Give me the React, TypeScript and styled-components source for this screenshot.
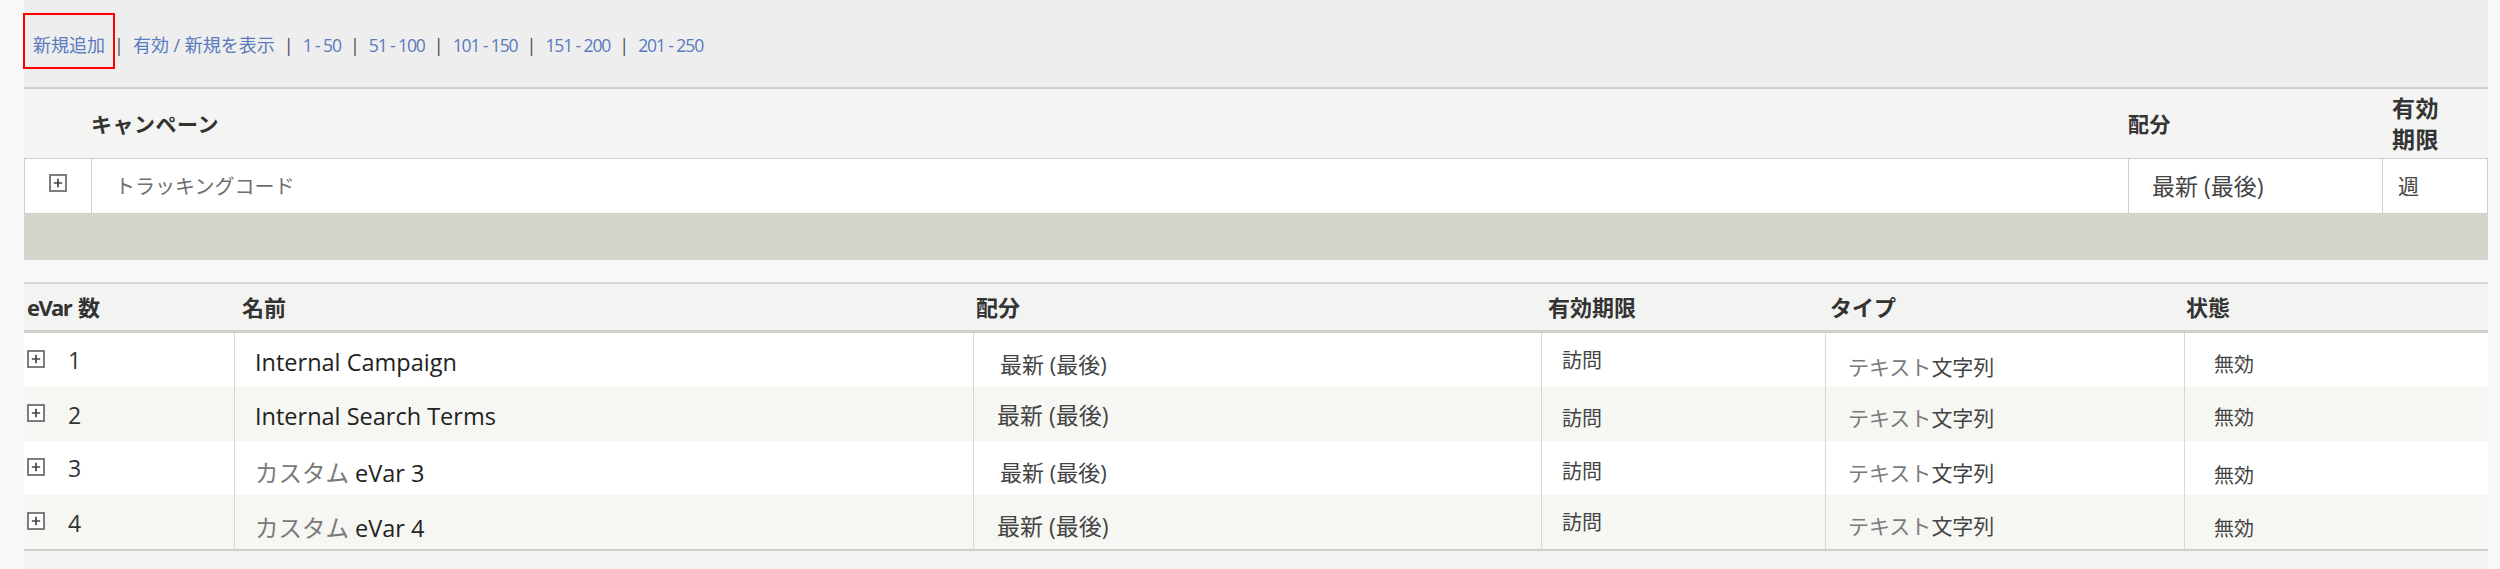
import React from "react";
import styled, { createGlobalStyle } from "styled-components";

const GlobalStyle = createGlobalStyle`
  html, body { margin: 0; padding: 0; background: #f8f8f8; }
  body {
    font-family: "Open Sans", "Noto Sans CJK JP", sans-serif;
    color: #333;
  }
  * { box-sizing: border-box; }
`;

const Page = styled.div`
  width: 2464px;
  margin-left: 24px;
  display: flex;
  flex-direction: column;
`;

/* ---------- toolbar ---------- */
const Toolbar = styled.div`
  height: 89px;
  background: #eeeeee;
  border-bottom: 2px solid #cfcfcf;
  display: flex;
  align-items: center;
  padding: 3px 0 0 9px;
  font-size: 18px;
  line-height: 24px;
`;

const LinkItem = styled.a<{ $latin: boolean }>`
  position: relative;
  color: #5a7bbd;
  text-decoration: none;
  white-space: pre;
  font-size: ${(p) => (p.$latin ? "17.5px" : "18px")};
  letter-spacing: ${(p) => (p.$latin ? "-1.1px" : "0")};
`;

const Annotation = styled.span`
  position: absolute;
  left: -10px;
  right: -10px;
  top: -20px;
  bottom: -12px;
  border: 2px solid #ff0000;
  pointer-events: none;
`;

const Sep = styled.span`
  color: #4d4d55;
  margin: 0 9px;
`;

/* ---------- campaign table ---------- */
const campCols = "67px 2037px 254px 106px";

const CampHeader = styled.div`
  height: 69px;
  background: #f4f4f2;
  display: grid;
  grid-template-columns: ${campCols};
  align-items: center;
  font-weight: 700;
  color: #333;
`;

const CampHeadCell = styled.div<{ $pl?: number; $size?: number; $lh?: number }>`
  padding-left: ${(p) => p.$pl ?? 0}px;
  font-size: ${(p) => p.$size ?? 21}px;
  line-height: ${(p) => p.$lh ?? 28}px;
  letter-spacing: 0.5px;
`;

const CampRow = styled.div`
  height: 56px;
  background: #ffffff;
  border: 1px solid #cfcfcb;
  display: grid;
  grid-template-columns: 66px 2037px 254px 105px;
`;

const CampCell = styled.div<{ $pl?: number; $line?: boolean; $center?: boolean }>`
  display: flex;
  align-items: center;
  justify-content: ${(p) => (p.$center ? "center" : "flex-start")};
  padding-left: ${(p) => p.$pl ?? 0}px;
  border-left: ${(p) => (p.$line ? "1px solid #cfcfcb" : "none")};
`;

const Band = styled.div`
  height: 46px;
  background: #d5d5cd;
`;

/* ---------- eVar table ---------- */
const evarCols = "210px 739px 568px 284px 359px 304px";

const EvarTable = styled.div`
  margin-top: 22px;
  border-top: 2px solid #d6d6d6;
  border-bottom: 2px solid #cfcfcf;
`;

const EvarHeader = styled.div`
  height: 49px;
  background: #f3f3f1;
  border-bottom: 3px solid #cfcfca;
  display: grid;
  grid-template-columns: ${evarCols};
  align-items: center;
`;

const HeadCell = styled.div<{ $pl: number }>`
  padding-left: ${(p) => p.$pl}px;
  font-size: 22px;
  font-weight: 700;
  color: #333;
  line-height: 30px;
`;

const Narrow = styled.span`
  letter-spacing: -1.6px;
  margin-right: 1px;
`;

const EvarRow = styled.div<{ $alt: boolean }>`
  height: 54px;
  background: ${(p) => (p.$alt ? "#f6f6f2" : "#ffffff")};
  display: grid;
  grid-template-columns: ${evarCols};
`;

const Cell = styled.div<{ $pl: number; $line?: boolean }>`
  display: flex;
  align-items: center;
  padding-left: ${(p) => p.$pl}px;
  border-left: ${(p) => (p.$line ? "1px solid #d6d6d2" : "none")};
  white-space: nowrap;
`;

const Txt = styled.span<{ $dy?: number; $size?: number; $color?: string }>`
  display: inline-block;
  transform: translateY(${(p) => p.$dy ?? 0}px);
  font-size: ${(p) => p.$size ?? 21}px;
  color: ${(p) => p.$color ?? "#444"};
  line-height: 30px;
`;

const Num = styled.span<{ $dy: number }>`
  display: inline-block;
  margin-left: 23px;
  transform: translateY(${(p) => p.$dy}px);
  font-size: 23px;
  color: #333;
  line-height: 30px;
`;

const Light = styled.span`
  color: #7a7a7a;
`;

const Footer = styled.div`
  height: 20px;
  background: #f3f3f3;
`;

const IconWrap = styled.span<{ $dy?: number }>`
  display: inline-flex;
  transform: translateY(${(p) => p.$dy ?? 0}px);
`;

const PlusBox: React.FC<{ dy?: number }> = ({ dy }) => (
  <IconWrap $dy={dy}>
    <svg width="18" height="18" viewBox="0 0 18 18">
      <rect x="1" y="1" width="16" height="16" fill="#fff" stroke="#7d7d7d" strokeWidth="2" />
      <path d="M4.8 9h8.4M9 4.8v8.4" stroke="#454545" strokeWidth="1.7" />
    </svg>
  </IconWrap>
);

const links = [
  "新規追加",
  "有効 / 新規を表示",
  "1 - 50",
  "51 - 100",
  "101 - 150",
  "151 - 200",
  "201 - 250",
];

type Row = {
  n: number;
  name: React.ReactNode;
  dy: [number, number, number, number, number, number];
  allocSize: number;
  allocPl: number;
};

const rows: Row[] = [
  { n: 1, name: "Internal Campaign", dy: [0, 2, 4, 1, 7, 5], allocSize: 22, allocPl: 26 },
  { n: 2, name: "Internal Search Terms", dy: [1, 2, 1, 5, 4, 4], allocSize: 23, allocPl: 23 },
  {
    n: 3,
    name: (
      <>
        <Light>カスタム</Light> eVar 3
      </>
    ),
    dy: [0, 5, 4, 4, 5, 8],
    allocSize: 22,
    allocPl: 26,
  },
  {
    n: 4,
    name: (
      <>
        <Light>カスタム</Light> eVar 4
      </>
    ),
    dy: [1, 6, 4, 1, 4, 7],
    allocSize: 23,
    allocPl: 23,
  },
];

const heads: { label: React.ReactNode; key: string; pl: number }[] = [
  {
    key: "evar",
    label: (
      <>
        <Narrow>eVar</Narrow> 数
      </>
    ),
    pl: 3,
  },
  { key: "name", label: "名前", pl: 8 },
  { key: "alloc", label: "配分", pl: 3 },
  { key: "exp", label: "有効期限", pl: 7 },
  { key: "type", label: "タイプ", pl: 5 },
  { key: "status", label: "状態", pl: 2 },
];

export default function App() {
  return (
    <>
      <GlobalStyle />
      <Page>
        <Toolbar>
          {links.map((l, i) => (
            <React.Fragment key={l}>
              {i > 0 && <Sep>|</Sep>}
              <LinkItem href="#" $latin={i > 1}>
                {l}
                {i === 0 && <Annotation />}
              </LinkItem>
            </React.Fragment>
          ))}
        </Toolbar>

        <CampHeader>
          <CampHeadCell />
          <CampHeadCell>キャンペーン</CampHeadCell>
          <CampHeadCell>配分</CampHeadCell>
          <CampHeadCell $pl={10} $size={23} $lh={31}>
            有効
            <br />
            期限
          </CampHeadCell>
        </CampHeader>
        <CampRow>
          <CampCell $center>
            <PlusBox dy={-3} />
          </CampCell>
          <CampCell $line $pl={23}>
            <Txt $size={20} $color="#6e6e6e" $dy={1}>
              トラッキングコード
            </Txt>
          </CampCell>
          <CampCell $line $pl={23}>
            <Txt $size={23} $color="#444">
              最新 (最後)
            </Txt>
          </CampCell>
          <CampCell $line $pl={15}>
            <Txt $size={21} $color="#444">
              週
            </Txt>
          </CampCell>
        </CampRow>
        <Band />

        <EvarTable>
          <EvarHeader>
            {heads.map((h) => (
              <HeadCell key={h.key} $pl={h.pl}>
                {h.label}
              </HeadCell>
            ))}
          </EvarHeader>
          {rows.map((r, i) => (
            <EvarRow key={r.n} $alt={i % 2 === 1}>
              <Cell $pl={3}>
                <PlusBox dy={-1} />
                <Num $dy={r.dy[0]}>{r.n}</Num>
              </Cell>
              <Cell $line $pl={20}>
                <Txt $size={23.5} $color="#222" $dy={r.dy[1]}>
                  {r.name}
                </Txt>
              </Cell>
              <Cell $line $pl={r.allocPl}>
                <Txt $size={r.allocSize} $dy={r.dy[2]}>
                  最新 (最後)
                </Txt>
              </Cell>
              <Cell $line $pl={20}>
                <Txt $size={20} $dy={r.dy[3]}>
                  訪問
                </Txt>
              </Cell>
              <Cell $line $pl={22}>
                <Txt $size={21} $dy={r.dy[4]}>
                  <Light>テキスト</Light>文字列
                </Txt>
              </Cell>
              <Cell $line $pl={29}>
                <Txt $size={20} $dy={r.dy[5]}>
                  無効
                </Txt>
              </Cell>
            </EvarRow>
          ))}
        </EvarTable>
        <Footer />
      </Page>
    </>
  );
}
